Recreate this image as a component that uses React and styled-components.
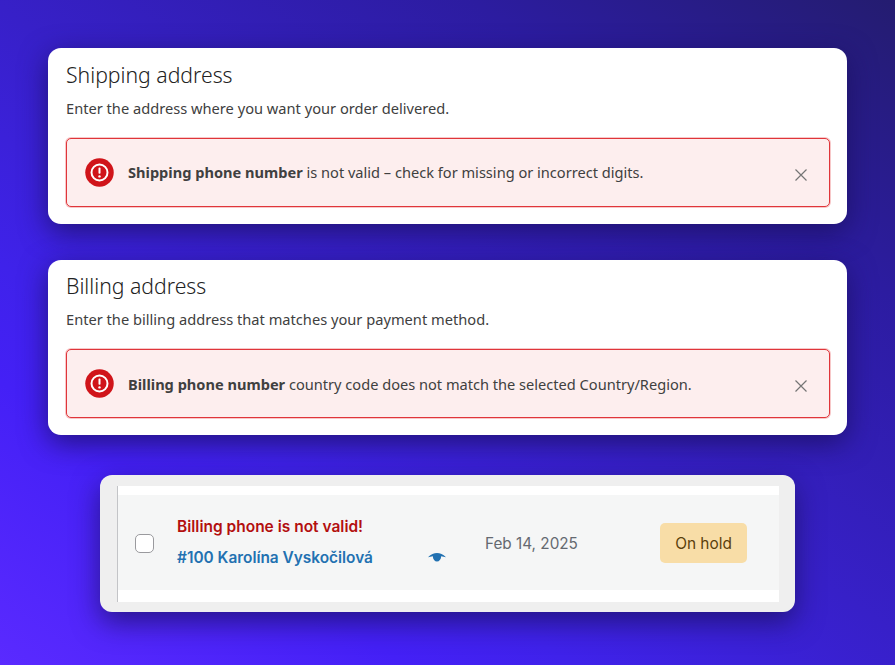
import React from 'react';
import styled, {createGlobalStyle} from 'styled-components';

const GlobalStyle = createGlobalStyle`
    html, body {
        margin: 0;
        padding: 0;
    }
    body {
        width: 895px;
        height: 665px;
        overflow: hidden;
    }
`;

const Page = styled.main`
    box-sizing: border-box;
    width: 895px;
    height: 665px;
    padding: 48px 48px 0;
    display: flex;
    flex-direction: column;
    background: linear-gradient(215deg, #241c70 0%, #2c1ca0 23%, #3720c8 49%, #3f22ea 69%, #4420f6 78%, #5a2aff 100%);
`;

const AddressCard = styled.section`
    box-sizing: border-box;
    height: ${p => p.h}px;
    margin-bottom: ${p => p.gap}px;
    padding: ${p => p.top}px 17px 0 18px;
    background: #fff;
    border-radius: 13px;
    box-shadow: 0 8px 28px rgba(25, 15, 90, 0.75);
    font-family: "Noto Sans", sans-serif;
`;

const Title = styled.h2`
    margin: 0;
    font-size: 21.2px;
    line-height: 30px;
    font-weight: 300;
    color: #222;
`;

const Subtitle = styled.p`
    margin: 8px 0 0;
    font-size: 14.65px;
    line-height: 20px;
    color: #404040;
`;

const Alert = styled.div`
    box-sizing: border-box;
    height: 69px;
    margin-top: 20px;
    padding: 0 22px 0 18px;
    display: flex;
    align-items: center;
    background: #fdeeee;
    border: 1px solid #e0353a;
    border-radius: 5px;
    box-shadow: 0 0 0 1px rgba(224, 34, 41, 0.25);
`;

const AlertText = styled.div`
    flex: 1;
    margin-left: 14px;
    margin-top: ${p => p.shift}px;
    font-size: 14.6px;
    color: #404040;

    b {
        font-weight: 700;
    }
`;

const OrderCard = styled.section`
    box-sizing: border-box;
    width: 695px;
    height: 137px;
    margin-left: 52px;
    padding: 11px 16px 10px 17px;
    background: #efefef;
    border-radius: 12px;
    box-shadow: 0 10px 28px rgba(25, 15, 90, 0.7);
    font-family: Inter, sans-serif;
`;

const OrderTable = styled.div`
    box-sizing: border-box;
    height: 116px;
    padding: 9px 0 11px;
    background: #fff;
    border-left: 1px solid #c3c4c7;
`;

const OrderRow = styled.div`
    height: 95px;
    padding-left: 17px;
    display: flex;
    align-items: center;
    background: #f5f6f6;
`;

const Checkbox = styled.span`
    box-sizing: border-box;
    width: 19px;
    height: 19px;
    margin-top: 1px;
    background: #fff;
    border: 1px solid #9a9a9e;
    border-radius: 5px;
`;

const OrderInfo = styled.div`
    width: 216px;
    margin-left: 23px;
`;

const Warning = styled.div`
    font-size: 15.5px;
    line-height: 20px;
    font-weight: 600;
    color: #b30f0f;
`;

const OrderLink = styled.div`
    margin-top: 11px;
    font-size: 15.4px;
    line-height: 20px;
    font-weight: 600;
    color: #2271b1;
`;

const EyeBox = styled.span`
    width: 18px;
    margin-top: 30px;
    margin-left: 35px;
    display: flex;
`;

const OrderDate = styled.div`
    margin-left: 39px;
    margin-top: 1px;
    width: 175px;
    font-size: 15.3px;
    color: #646970;
`;

const StatusBadge = styled.div`
    box-sizing: border-box;
    width: 87px;
    height: 40px;
    padding-top: 1px;
    display: flex;
    align-items: center;
    justify-content: center;
    background: #f8dda7;
    border-radius: 5px;
    font-size: 15.4px;
    color: #5b3f0b;
`;

const ErrorIcon = () => (
    <svg width="29" height="29" viewBox="0 0 29 29" style={{flex: 'none'}}>
        <circle cx="14.5" cy="14.5" r="14.25" fill="#d0141a" />
        <circle cx="14.5" cy="14.5" r="8" fill="none" stroke="#fff" strokeWidth="2" />
        <rect x="13.5" y="9.6" width="2" height="6.2" rx="0.8" fill="#fff" />
        <circle cx="14.5" cy="18.4" r="1.2" fill="#fff" />
    </svg>
);

const CloseIcon = () => (
    <svg width="12" height="12" viewBox="0 0 12 12" style={{flex: 'none', marginTop: '4px'}}>
        <path d="M0.5 0.5 L11.5 11.5 M11.5 0.5 L0.5 11.5" stroke="#757575" strokeWidth="1.2" fill="none" />
    </svg>
);

const EyeIcon = () => (
    <svg width="18" height="10" viewBox="0 0 18 10">
        <path d="M0 4.2 C3 1.2 6 0 9 0 C12 0 15 1.2 18 4.2 C16.4 4 14.8 3.6 13.2 3.3 C13 6.4 11.3 8.6 9 8.6 C6.7 8.6 5 6.4 4.8 3.3 C3.2 3.6 1.6 4 0 4.2 Z" fill="#2271b1" />
    </svg>
);

const addresses = [
    {
        title: 'Shipping address',
        subtitle: 'Enter the address where you want your order delivered.',
        strong: 'Shipping phone number',
        message: ' is not valid – check for missing or incorrect digits.',
        h: 176,
        gap: 36,
        top: 12,
        shift: -1,
    },
    {
        title: 'Billing address',
        subtitle: 'Enter the billing address that matches your payment method.',
        strong: 'Billing phone number',
        message: ' country code does not match the selected Country/Region.',
        h: 175,
        gap: 40,
        top: 11,
        shift: 1,
    },
];

export default function App() {
    return (
        <Page>
            <GlobalStyle />
            {addresses.map(a => (
                <AddressCard key={a.title} h={a.h} gap={a.gap} top={a.top}>
                    <Title>{a.title}</Title>
                    <Subtitle>{a.subtitle}</Subtitle>
                    <Alert>
                        <ErrorIcon />
                        <AlertText shift={a.shift}><b>{a.strong}</b>{a.message}</AlertText>
                        <CloseIcon />
                    </Alert>
                </AddressCard>
            ))}
            <OrderCard>
                <OrderTable>
                    <OrderRow>
                        <Checkbox />
                        <OrderInfo>
                            <Warning>Billing phone is not valid!</Warning>
                            <OrderLink>#100 Karolína Vyskočilová</OrderLink>
                        </OrderInfo>
                        <EyeBox><EyeIcon /></EyeBox>
                        <OrderDate>Feb 14, 2025</OrderDate>
                        <StatusBadge>On hold</StatusBadge>
                    </OrderRow>
                </OrderTable>
            </OrderCard>
        </Page>
    );
}
